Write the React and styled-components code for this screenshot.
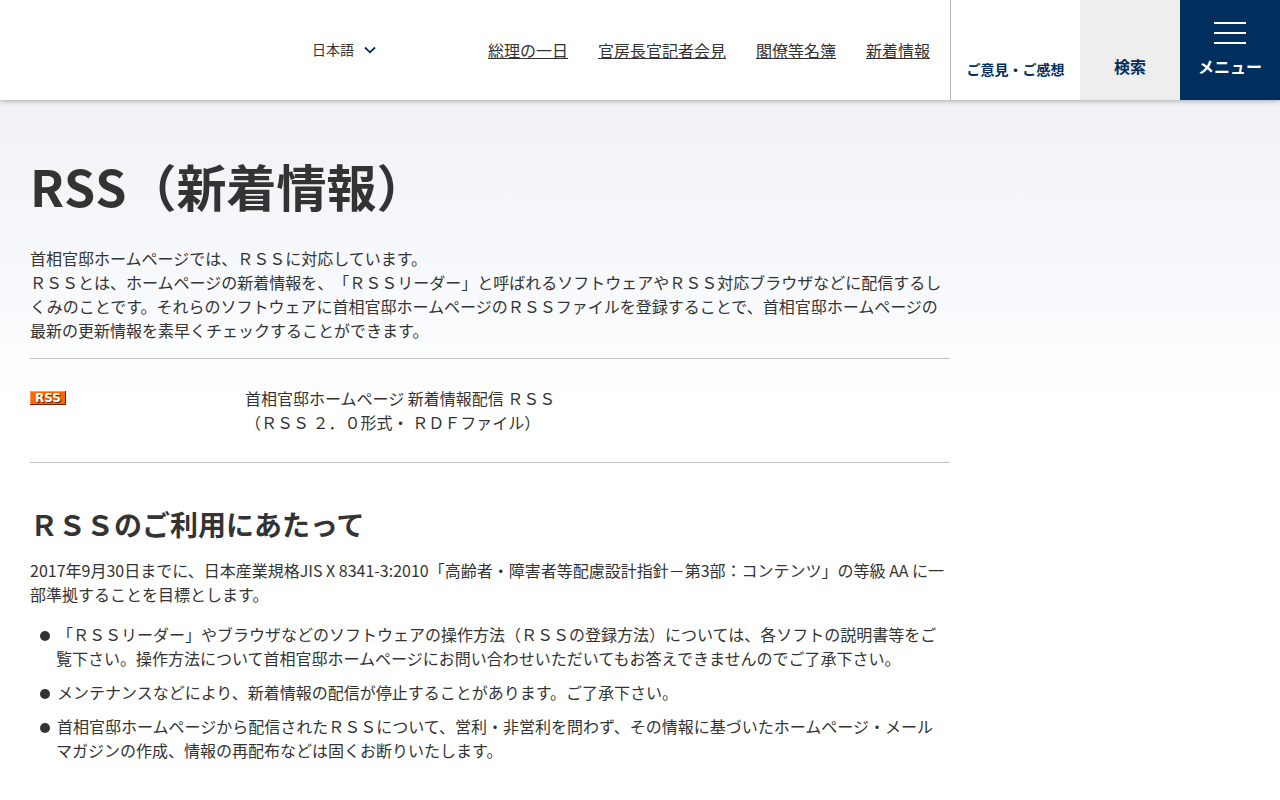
import React, { useState } from "react";
import styled, { createGlobalStyle } from "styled-components";

const GlobalStyle = createGlobalStyle`
    * {
        box-sizing: border-box;
    }
    body {
        margin: 0;
        color: #333;
        background: #fff;
        font-family: "Noto Sans CJK JP", sans-serif;
        font-size: 16px;
        line-height: 24px;
        text-spacing-trim: space-all;
    }
`;

const HeaderBar = styled.header`
    position: relative;
    display: flex;
    height: 100px;
    background-color: #fff;
    box-shadow: 0 0 6px rgba(0, 0, 0, 0.4);
`;

const LanguageLabel = styled.label`
    display: grid;
    align-items: center;
    width: 64px;
    margin-left: 312px;
    color: #002e5d;

    select,
    svg {
        grid-area: 1 / 1;
    }
    svg {
        justify-self: end;
        pointer-events: none;
    }
`;

const LanguageSelect = styled.select`
    appearance: none;
    width: 100%;
    padding: 0 0 2px;
    border: 0;
    background: none;
    color: #333;
    font-family: inherit;
    font-size: 14px;
    line-height: 24px;
    cursor: pointer;
`;

const HeaderNav = styled.nav`
    display: flex;
    align-items: center;
    gap: 30px;
    margin-left: auto;
    padding-right: 20px;
    white-space: nowrap;
`;

const NavLink = styled.a`
    color: #333;
`;

const OpinionLink = styled.a`
    display: flex;
    justify-content: center;
    align-items: flex-end;
    width: 130px;
    padding-bottom: 19px;
    border-left: 1px solid #b3b3b3;
    color: #002e5d;
    font-size: 14px;
    font-weight: bold;
    text-decoration: none;
`;

const HeaderButton = styled.button`
    display: flex;
    flex-direction: column;
    align-items: center;
    justify-content: flex-end;
    width: 100px;
    padding: 0 0 22px;
    border: 0;
    background-color: ${props => (props.$dark ? "#002e5d" : "#eee")};
    color: ${props => (props.$dark ? "#fff" : "#002e5d")};
    font-family: inherit;
    font-size: 16px;
    font-weight: bold;
    line-height: 24px;
    cursor: pointer;
`;

const MenuLines = styled.span`
    width: 32px;
    height: 22px;
    margin-bottom: 10px;
    border-top: 2px solid #fff;
    border-bottom: 2px solid #fff;

    &::before {
        content: "";
        display: block;
        height: 2px;
        margin-top: 8px;
        background-color: #fff;
    }
`;

const MainArea = styled.main`
    padding: 50px 30px 38px;
    background: linear-gradient(#eff1f5, #f9fafd 200px, #fff 310px);
`;

const Content = styled.div`
    max-width: 920px;
`;

const PageTitle = styled.h1`
    margin: 0 0 25px;
    font-size: 50px;
    line-height: 71px;
    font-kerning: none;
`;

const SectionTitle = styled.h2`
    margin: 39px 0 12px;
    font-size: 28px;
    line-height: 44px;
`;

const Text = styled.p`
    margin: 0;
`;

const FeedRow = styled.div`
    display: flex;
    margin-top: 16px;
    padding: 27px 0 28px;
    border-top: 1px solid #bfbfbf;
    border-bottom: 1px solid #bfbfbf;
`;

const FeedLink = styled.a`
    width: 215px;
    padding-top: 5px;

    svg {
        display: block;
    }
`;

const NoteList = styled.ul`
    margin: 16px 0 0;
    padding: 0 10px 0 26px;
    list-style: none;
`;

const NoteItem = styled.li`
    margin-bottom: 10px;
    text-indent: -16px;

    &::before {
        content: "";
        display: inline-block;
        width: 10px;
        height: 10px;
        margin-right: 7px;
        border-radius: 50%;
        background-color: #333;
    }
`;

const navItems = ["総理の一日", "官房長官記者会見", "閣僚等名簿", "新着情報"];

const notes = [
    "「ＲＳＳリーダー」やブラウザなどのソフトウェアの操作方法（ＲＳＳの登録方法）については、各ソフトの説明書等をご覧下さい。操作方法について首相官邸ホームページにお問い合わせいただいてもお答えできませんのでご了承下さい。",
    "メンテナンスなどにより、新着情報の配信が停止することがあります。ご了承下さい。",
    "首相官邸ホームページから配信されたＲＳＳについて、営利・非営利を問わず、その情報に基づいたホームページ・メールマガジンの作成、情報の再配布などは固くお断りいたします。"
];

const RssBadge = () => (
    <svg width="36" height="14" viewBox="0 0 36 14" shapeRendering="crispEdges">
        <rect width="36" height="14" fill="#662200" />
        <rect width="35" height="13" fill="#ff9955" />
        <rect x="1" y="1" width="34" height="12" fill="#ff6600" />
        <text x="6" y="12" fill="#662200" fontFamily="DejaVu Sans" fontWeight="bold" fontSize="12">RSS</text>
        <text x="5" y="11" fill="#fff" fontFamily="DejaVu Sans" fontWeight="bold" fontSize="12">RSS</text>
    </svg>
);

const Header = () => {
    const [language, setLanguage] = useState("ja");

    return (
        <HeaderBar>
            <LanguageLabel>
                <LanguageSelect
                    name="language"
                    aria-label="日本語"
                    value={language}
                    onChange={event => setLanguage(event.target.value)}
                >
                    <option value="ja">日本語</option>
                </LanguageSelect>
                <svg width="12" height="8" viewBox="0 0 12 8">
                    <path d="M1 1.5 L6 6.3 L11 1.5" fill="none" stroke="currentColor" strokeWidth="1.8" />
                </svg>
            </LanguageLabel>
            <HeaderNav>
                {navItems.map(item => (
                    <NavLink key={item} href="#">{item}</NavLink>
                ))}
            </HeaderNav>
            <OpinionLink href="#">ご意見・ご感想</OpinionLink>
            <HeaderButton type="button">検索</HeaderButton>
            <HeaderButton type="button" $dark>
                <MenuLines />
                メニュー
            </HeaderButton>
        </HeaderBar>
    );
};

const App = () => (
    <>
        <GlobalStyle />
        <Header />
        <MainArea>
            <Content>
                <PageTitle>RSS（新着情報）</PageTitle>
                <Text>
                    首相官邸ホームページでは、ＲＳＳに対応しています。
                    <br />
                    ＲＳＳとは、ホームページの新着情報を、「ＲＳＳリーダー」と呼ばれるソフトウェアやＲＳＳ対応ブラウザなどに配信するしくみのことです。それらのソフトウェアに首相官邸ホームページのＲＳＳファイルを登録することで、首相官邸ホームページの最新の更新情報を素早くチェックすることができます。
                </Text>
                <FeedRow>
                    <FeedLink href="#">
                        <RssBadge />
                    </FeedLink>
                    <Text>
                        首相官邸ホームページ 新着情報配信 ＲＳＳ
                        <br />
                        （ＲＳＳ ２．０形式・ ＲＤＦファイル）
                    </Text>
                </FeedRow>
                <SectionTitle>ＲＳＳのご利用にあたって</SectionTitle>
                <Text>
                    2017年9月30日までに、日本産業規格JIS X 8341-3:2010「高齢者・障害者等配慮設計指針－第3部：コンテンツ」の等級 AA に一部準拠することを目標とします。
                </Text>
                <NoteList>
                    {notes.map(note => (
                        <NoteItem key={note}>{note}</NoteItem>
                    ))}
                </NoteList>
            </Content>
        </MainArea>
    </>
);

export default App;
